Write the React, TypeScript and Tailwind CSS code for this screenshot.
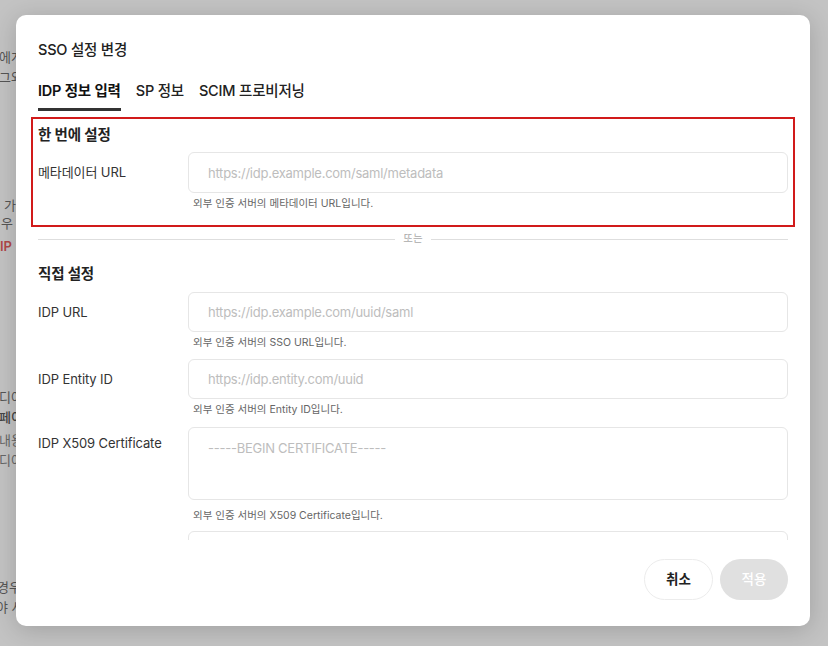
import React from "react";

const font = { fontFamily: 'Inter, "Noto Sans CJK KR", sans-serif' };

function Help({ children, mt = "mt-[3px]" }: { children: React.ReactNode; mt?: string }) {
  return <div className={`${mt} pl-[5px] text-[10.5px] leading-[16px] text-[#666]`}>{children}</div>;
}

function Field({
  label,
  placeholder,
  help,
  h = "h-[40px]",
}: {
  label: string;
  placeholder: string;
  help: string;
  h?: string;
}) {
  return (
    <div className="flex">
      <div className="w-[150px] shrink-0 pt-[10px] text-[13px] leading-[20px] tracking-[-0.1px] text-[#333]">{label}</div>
      <div className="flex-1">
        <input
          readOnly
          placeholder={placeholder}
          className={`${h} w-full rounded-[6px] border border-[#e6e6e6] bg-white px-[19px] text-[13px] tracking-[-0.25px] text-[#333] outline-none placeholder:text-[#bdbdbd]`}
          style={font}
        />
        <Help>{help}</Help>
      </div>
    </div>
  );
}

export default function App() {
  return (
    <div className="relative h-[646px] w-[828px] overflow-hidden bg-[#c3c3c3]" style={font}>
      {/* dimmed page underneath */}
      <div className="flex w-[16px] flex-col overflow-hidden whitespace-nowrap text-[13px] leading-[20px] text-[#555]">
        <div className="mt-[47px] -ml-[1px]">에게</div>
        <div className="-ml-[1px]">그와</div>
        <div className="mt-[108px] pl-[4px]">가</div>
        <div className="mt-[-2px] pl-[1px]">우</div>
        <div className="mt-[3px] font-semibold text-[#b04848]">IP</div>
        <div className="mt-[131px] -ml-[1px]">디어</div>
        <div className="-ml-[1px] font-medium text-[#444]">페이</div>
        <div className="mt-[3px] -ml-[1px] text-[#666]">내용</div>
        <div className="-ml-[1px] text-[#666]">디어</div>
        <div className="mt-[107px] -ml-[3px]">경우</div>
        <div className="-ml-[4px]">야 사</div>
      </div>

      {/* modal */}
      <div className="absolute left-[16px] top-[15px] flex h-[611px] w-[794px] flex-col rounded-[10px] bg-white px-[22px] shadow-[0_4px_24px_rgba(0,0,0,0.18)]">
        <div className="pt-[25px] text-[14.5px] font-medium leading-[20px] tracking-[-0.2px] text-[#222]">SSO 설정 변경</div>
        <div className="mt-[21px] flex gap-[15px] text-[14.5px] leading-[20px] tracking-[-0.2px]">
          <div className="border-b-[3px] border-[#333] pb-[7px] font-semibold text-[#111]">IDP 정보 입력</div>
          <div className="pb-[10px] font-medium text-[#222]">SP 정보</div>
          <div className="pb-[10px] font-medium text-[#222]">SCIM 프로비저닝</div>
        </div>

        <div className="-mx-[7px] h-[429px] overflow-hidden px-[7px] pt-[6px]">
          <div className="-mx-[7px] border-2 border-[#d11a1a] px-[5px] pb-[13px] pt-[6px]">
            <div className="text-[14.5px] font-semibold leading-[20px] tracking-[-0.2px] text-[#222]">한 번에 설정</div>
            <div className="mt-[7px]">
              <Field
                label="메타데이터 URL"
                placeholder="https://idp.example.com/saml/metadata"
                help="외부 인증 서버의 메타데이터 URL입니다."
                h="h-[41px]"
              />
            </div>
          </div>

          <div className="mt-[4px] flex h-[16px] items-center gap-[8px]">
            <div className="h-px flex-1 bg-[#dedede]" />
            <div className="text-[10.5px] text-[#aaa]">또는</div>
            <div className="h-px flex-1 bg-[#dedede]" />
          </div>

          <div className="mt-[17px] text-[14.5px] font-semibold leading-[20px] tracking-[-0.2px] text-[#222]">직접 설정</div>

          <div className="mt-[8px]">
            <Field label="IDP URL" placeholder="https://idp.example.com/uuid/saml" help="외부 인증 서버의 SSO URL입니다." />
          </div>
          <div className="mt-[8px]">
            <Field label="IDP Entity ID" placeholder="https://idp.entity.com/uuid" help="외부 인증 서버의 Entity ID입니다." />
          </div>
          <div className="mt-[9px] flex">
            <div className="w-[150px] shrink-0 pt-[6px] text-[13px] leading-[20px] tracking-[-0.1px] text-[#333]">IDP X509 Certificate</div>
            <div className="flex-1">
              <textarea
                readOnly
                placeholder="-----BEGIN CERTIFICATE-----"
                className="block h-[73px] w-full resize-none rounded-[6px] border border-[#e6e6e6] px-[19px] pt-[10px] text-[13px] leading-[20px] tracking-[-0.25px] outline-none placeholder:text-[#bdbdbd]"
                style={font}
              />
              <Help mt="mt-[8px]">외부 인증 서버의 X509 Certificate입니다.</Help>
              <div className="mt-[7px] h-[40px] rounded-[6px] border border-[#e6e6e6]" />
            </div>
          </div>
        </div>

        <div className="flex justify-end gap-[7px] pt-[19px]">
          <button className="h-[41px] w-[69px] rounded-full border border-[#ececec] bg-white text-[13.5px] font-semibold text-[#222]">
            취소
          </button>
          <button className="h-[41px] w-[68px] rounded-full bg-[#e0e0e0] text-[13.5px] font-medium text-white">적용</button>
        </div>
      </div>
    </div>
  );
}
